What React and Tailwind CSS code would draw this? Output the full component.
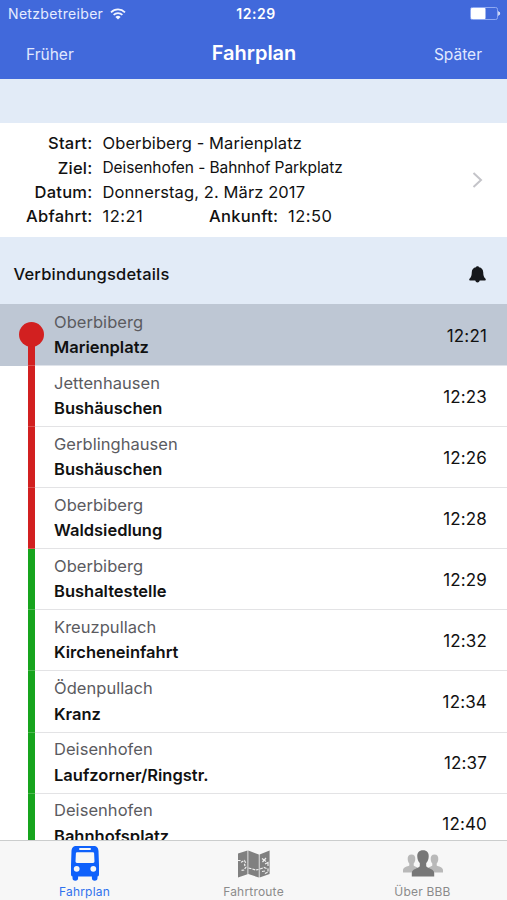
import React from 'react';

const stops = [
  { place: 'Oberbiberg', stop: 'Marienplatz', time: '12:21', line: 'red' },
  { place: 'Jettenhausen', stop: 'Bushäuschen', time: '12:23', line: 'red' },
  { place: 'Gerblinghausen', stop: 'Bushäuschen', time: '12:26', line: 'red' },
  { place: 'Oberbiberg', stop: 'Waldsiedlung', time: '12:28', line: 'red' },
  { place: 'Oberbiberg', stop: 'Bushaltestelle', time: '12:29', line: 'green' },
  { place: 'Kreuzpullach', stop: 'Kircheneinfahrt', time: '12:32', line: 'green' },
  { place: 'Ödenpullach', stop: 'Kranz', time: '12:34', line: 'green' },
  { place: 'Deisenhofen', stop: 'Laufzorner/Ringstr.', time: '12:37', line: 'green' },
  { place: 'Deisenhofen', stop: 'Bahnhofsplatz', time: '12:40', line: 'green' },
];

function WifiIcon() {
  return (
    <svg className="ml-[7px] h-[12px] w-[16px]" viewBox="0 0 16 12" fill="none" stroke="#f2f5ff" strokeWidth="1.7">
      <path d="M1 4.3a10 10 0 0 1 14 0" />
      <path d="M3.6 6.9a6.3 6.3 0 0 1 8.8 0" />
      <path d="M8 11.6 5.4 9a3.7 3.7 0 0 1 5.2 0z" fill="#f2f5ff" stroke="none" />
    </svg>
  );
}

function BatteryIcon() {
  return (
    <svg className="h-[13px] w-[31px]" viewBox="0 0 31 13">
      <rect x="0.5" y="0.5" width="27" height="12" rx="1.8" fill="none" stroke="#8fa9f2" />
      <rect x="1" y="1" width="14.5" height="11" rx="0.8" fill="#fff" />
      <path d="M28.6 4.6c1.4.6 1.4 3.2 0 3.8z" fill="#fff" stroke="#fff" strokeWidth=".6" />
    </svg>
  );
}

function BellIcon() {
  return (
    <svg className="h-[17px] w-[17px]" viewBox="0 0 17 17" fill="#16181c">
      <path d="M8.5.3c1 0 1.4.5 1.5 1 2.7.5 4.1 2.4 4.2 4.8.1 3.2.5 5.3 2.3 6.7.5.4.4 1.7-.4 1.7H.9c-.8 0-.9-1.3-.4-1.7 1.8-1.4 2.200-3.500 2.300-6.700.1-2.400 1.500-4.300 4.200-4.800.1-.5.5-1 1.500-1z" />
      <path d="M6.3 14h4.4c0 1.5-.9 2.4-2.2 2.4s-2.2-.9-2.2-2.4z" />
    </svg>
  );
}

function BusIcon() {
  return (
    <svg className="h-[35px] w-[28px]" viewBox="0 0 28 35">
      <path
        fill="#0f61fb"
        fillRule="evenodd"
        d="M5.5 0h17C26 0 27.3 2 27.5 5l.5 14v9.5q0 2-1.5 2V32a2.8 2.8 0 0 1-5.6 0v-1.5H7.1V32a2.8 2.8 0 0 1-5.6 0v-1.5Q0 30.5 0 28.5V19L.5 5C.7 2 2 0 5.5 0zM9 2.1a1 1 0 0 0 0 2h10a1 1 0 0 0 0-2zM6 6.3Q5 6.3 4.9 7.3L4.5 15.5q0 1.4 1.4 1.4h16.2q1.4 0 1.4-1.4L23.1 7.3Q23 6.3 22 6.3zM5.7 19.9a2.9 2.9 0 1 0 0 5.8a2.9 2.9 0 1 0 0-5.8zM22.3 19.9a2.9 2.9 0 1 0 0 5.8a2.9 2.9 0 1 0 0-5.8z"
      />
    </svg>
  );
}

function MapIcon() {
  return (
    <svg className="h-[28px] w-[34px]" viewBox="0 0 34 28">
      <path fill="#808080" d="M1 3.5 10.5.5v23.700L1 27.500zM11.300.5l10.500 4v23l-10.500-3.500zM22.600 4.500l10-4v23.500l-10 3.500z" />
      <g fill="none" stroke="#f0f0f0" strokeWidth="1.2">
        <path d="M1 10.5h2l1.5 1.5 3-1.5 1 2-1 2.5 1.5 2-2 3-3 .5" strokeDasharray="2.5 1.2" />
        <path d="m11.5 18 4 1 3 1 3-.5M23 19l4-1.5 4 1.5v3l-4 2" strokeDasharray="3 1" />
        <path d="m25 8.5 4 3m0-3.5-3.5 4M28 14l3-1.5v3.5M25 21.5l3-.5" />
      </g>
    </svg>
  );
}

function PeopleIcon() {
  return (
    <svg className="h-[28px] w-[40px]" viewBox="0 0 40 28">
      <path
        fill="#b9b9b9"
        d="M8.5 4.5c2.7 0 4 2 3.8 4.7-.1 1.7-.8 3.3-1.6 4.2v2.1c1 1.3 4.8 1.5 5.3 4v3H0v-2.5c.2-3 4.5-3.4 6.3-4.5v-2.1c-.8-.9-1.5-2.5-1.6-4.2C4.5 6.5 5.8 4.5 8.5 4.5z"
      />
      <path
        fill="#b9b9b9"
        d="M31.5 4.5c-2.7 0-4 2-3.8 4.7.1 1.7.8 3.3 1.6 4.2v2.1c-1 1.3-4.8 1.5-5.3 4v3h16v-2.5c-.2-3-4.5-3.4-6.3-4.5v-2.1c.8-.9 1.5-2.5 1.6-4.2.2-2.7-1.1-4.7-3.8-4.7z"
      />
      <path
        fill="#777"
        d="M20 .3c4 0 6 2.7 5.7 6.4-.1 2.9-1.2 5-2.5 6.4v3.2c1.6 2.5 7.8 2.3 8 6.7v3.5H8.8V23c.2-4.4 6.4-4.2 8-6.7v-3.2c-1.3-1.4-2.4-3.5-2.5-6.4C14 3 16 .3 20 .3z"
      />
    </svg>
  );
}

function StopRow({ item, first }) {
  return (
    <div className={`flex shrink-0 ${first ? 'h-[62px] bg-[#bec7d4]' : 'h-[61.1px] bg-white'}`}>
      <div className="flex w-[35px] justify-end">
        <div className={`relative w-[7px] border-b ${item.line === 'red' ? 'bg-[#d22020] border-[#da5351]' : 'bg-[#17a41d] border-[#4cb94f]'} ${first ? 'mt-[31px]' : ''}`}>
          {first && <div className="absolute -top-[13px] -left-[9px] h-[25px] w-[25px] rounded-full bg-[#d22020]" />}
        </div>
      </div>
      <div className={`flex flex-1 items-center justify-between border-b pr-[20px] pl-[19px] ${first ? 'border-[#dfe3ea] pt-px' : 'border-[#e3e3e5]'}`}>
        <div className="leading-[25.5px]">
          <div className="text-[16.5px] tracking-[0.04px] text-[#5b5b5f]">{item.place}</div>
          <div className="text-[16.5px] font-semibold text-[#111]">{item.stop}</div>
        </div>
        <div className="pt-[3px] text-[17px] tracking-[0.15px] text-[#111]">{item.time}</div>
      </div>
    </div>
  );
}

export default function App() {
  return (
    <div className="flex h-[900px] w-[507px] flex-col overflow-hidden bg-white font-['Inter',sans-serif] text-[#111]">
      {/* HEADER */}
      <header className="h-[79px] shrink-0 bg-[#4169db] text-white">
        <div className="grid h-[27px] grid-cols-3 items-center pr-[6px] pl-[8px] text-[14px]">
          <div className="flex items-center text-[#e6ecff]">
            <span className="tracking-[0.33px]">Netzbetreiber</span>
            <WifiIcon />
          </div>
          <span className="pl-[3px] text-center font-semibold tracking-[0.5px]">12:29</span>
          <div className="flex justify-end"><BatteryIcon /></div>
        </div>
        <div className="grid h-[52px] grid-cols-3 items-center pr-[25px] pl-[26px] text-[15.5px] text-[#e0e8ff]">
          <span className="pt-[3px]">Früher</span>
          <span className="text-center text-[20px] leading-[50px] font-semibold text-white">Fahrplan</span>
          <span className="pt-[3px] text-right">Später</span>
        </div>
      </header>

      <div className="h-[44px] shrink-0 bg-[#e2ebf7]" />

      {/* CONNECTION */}
      <section className="flex h-[114px] shrink-0 items-center justify-between pr-[24px] text-[16.5px] leading-[24.4px]">
        <div className="grid grid-cols-[92.5px_auto] gap-x-[10px] tracking-[0.08px]">
          <span className="text-right font-medium tracking-[0.25px]">Start:</span>
          <span>Oberbiberg - Marienplatz</span>
          <span className="text-right font-medium tracking-[0.25px]">Ziel:</span>
          <span className="text-[15.5px] tracking-[-0.08px]">Deisenhofen - Bahnhof Parkplatz</span>
          <span className="text-right font-medium tracking-[0.25px]">Datum:</span>
          <span className="tracking-[0.1px]">Donnerstag, 2. März 2017</span>
          <span className="text-right font-medium tracking-[0.25px]">Abfahrt:</span>
          <div className="flex">
            <span className="w-[106.5px] tracking-[0.5px]">12:21</span>
            <span className="w-[79px] font-medium tracking-[0.3px]">Ankunft:</span>
            <span className="tracking-[0.5px]">12:50</span>
          </div>
        </div>
        <svg className="h-[16px] w-[11px]" viewBox="0 0 11 16" fill="none" stroke="#c4c4c9" strokeWidth="2">
          <path d="m1.5 1 7.5 7-7.5 7" />
        </svg>
      </section>

      <section className="flex h-[67px] shrink-0 items-center justify-between bg-[#e2ebf7] pt-[7px] pr-[21px] pl-[13.5px]">
        <h2 className="text-[16.5px] font-medium tracking-[0.18px]">Verbindungsdetails</h2>
        <BellIcon />
      </section>

      {/* STOPS */}
      <main className="flex h-[536px] shrink-0 flex-col overflow-hidden">
        {stops.map((item, idx) => (
          <StopRow key={idx} item={item} first={idx === 0} />
        ))}
      </main>

      {/* TABS */}
      <nav className="grid h-[60px] shrink-0 grid-cols-3 border-t border-[#cbcdcd] bg-[#f7f7f7] text-[12px] tracking-[0.2px] text-[#8b8b8b]">
        <div className="flex flex-col items-center pt-[5px] text-[#2f72ee]">
          <BusIcon />
          <span className="mt-[3px] leading-[16px]">Fahrplan</span>
        </div>
        <div className="flex flex-col items-center pt-[9px]">
          <MapIcon />
          <span className="mt-[6px] leading-[16px]">Fahrtroute</span>
        </div>
        <div className="flex flex-col items-center pt-[9px]">
          <PeopleIcon />
          <span className="mt-[6px] leading-[16px]">Über BBB</span>
        </div>
      </nav>
    </div>
  );
}
